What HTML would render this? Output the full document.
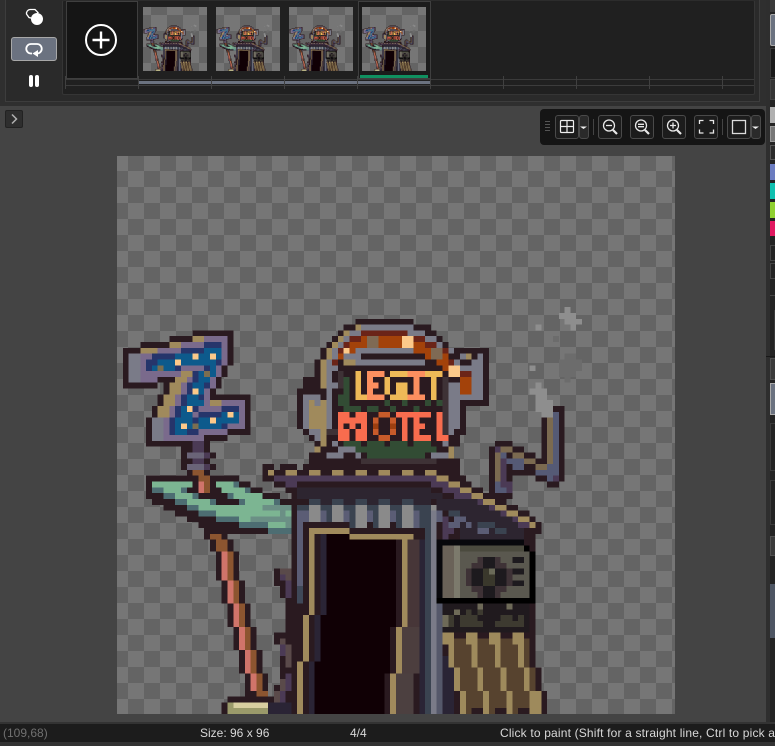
<!DOCTYPE html>
<html><head><meta charset="utf-8"><style>
html,body{margin:0;padding:0;width:775px;height:746px;overflow:hidden;background:#444;font-family:"Liberation Sans",sans-serif}
div,svg{position:absolute;box-sizing:border-box}
.b{border:1px solid #4a4a4a;border-radius:3px;background:#1c1c1c}
.t{top:7px;width:64px;height:64px;background:conic-gradient(#646464 25%,#767676 0 50%,#646464 0 75%,#767676 0);background-size:32px 32px;background-position:8px 8px}
.tick{width:1px;height:13px;top:76px;background:#404040}
.s{position:absolute;left:770px;width:5px;box-sizing:border-box}
.st{top:726px;font-size:12px;line-height:15px;color:#d8d8d8;white-space:nowrap;transform-origin:0 0}
</style></head><body>
<svg width="0" height="0" style="left:0;top:0"><defs><g id="a" shape-rendering="crispEdges">
<g fill="none" stroke-width="1" transform="translate(0 .5)">
<path stroke="#2a1a20" d="M13 30h7M9 31h11M4 32h16M1 33h19M1 34h19M1 35h19M1 36h18M1 37h18M1 38h17M1 39h6M8 39h10M8 40h9M7 41h16M7 42h16M6 43h17M6 44h17M5 45h18M5 46h18M5 47h18M5 48h14M5 49h11M11 50h5M11 51h6M11 52h5M11 53h6M12 54h4M5 55h16M5 56h18M5 57h20M5 58h23M6 59h24M8 60h23M10 61h21M12 62h19M14 63h17M15 64h16M15 65h4M17 66h3M16 66h4M16 67h4
M41 28h10M39 29h15M38 30h17M37 31h19M36 32h21M35 33h29M35 34h29M34 35h30M34 36h30M34 37h30M32 38h32M32 39h32M31 40h33M31 41h33M31 42h33M31 43h29M31 44h29M31 45h29M31 46h29M32 47h28M33 48h26M34 49h25M34 50h24M33 51h25M33 52h26M25 53h2M28 53h3M32 53h27M25 54h34M25 55h35M27 56h34M29 57h34M30 58h35M30 59h37M30 60h39M30 61h41M30 62h42M30 63h43M30 64h43M30 65h42"/>
<path stroke="#2a1a20" d="M75 43h2M73 44h4M73 45h4M73 46h4M73 47h4M73 48h4M73 49h4M65 49h3M64 50h6M73 50h4M64 51h8M73 51h4M64 52h13M64 53h13M64 54h13M64 55h4M72 55h5M64 56h4M74 56h2M64 57h4M64 58h4"/>
<path stroke="#a08a5c" d="M13 31h2M9 32h2M4 33h3M11 37h2M10 38h2M9 39h2M9 40h2M8 41h2M8 42h2M7 43h2M7 44h2M16 42h2"/>
<path stroke="#7a7b88" d="M2 34h2M2 35h2M2 36h2M2 37h2M2 38h2M6 45h2M6 46h2M6 47h2M6 48h2"/>
<path stroke="#7a6a8c" d="M15 31h4M11 32h4M18 32h1M7 33h4M18 33h1M4 34h2M18 34h1M4 35h1M18 35h1M4 36h1M11 36h4M17 36h1M4 37h7M17 37h1M4 38h3M12 38h1M16 38h1M11 39h1M16 39h1M11 40h1M15 40h1M10 41h1M15 41h1M10 42h1M15 42h1M18 42h4M9 43h1M14 43h4M21 43h1M9 44h1M13 44h1M21 44h1M8 45h1M21 45h1M8 46h1M19 46h3M8 47h1M14 47h5M8 48h7"/>
<path stroke="#0d5a8c" d="M15 33h3M10 34h8M7 35h10M6 36h4M16 36h1M14 37h3M14 38h2M13 39h2M13 40h2M12 41h2M12 42h3M11 43h2M11 44h2M18 44h3M10 45h11M10 46h8M10 47h2"/>
<path stroke="#26356b" d="M15 32h3M11 33h4M6 34h4M5 35h2M17 35h1M5 36h1M10 36h1M15 36h1M13 37h1M13 38h1M12 39h1M15 39h1M12 40h1M11 41h1M14 41h1M11 42h1M10 43h1M13 43h1M18 43h3M10 44h1M14 44h4M9 45h1M13 45h1M9 46h1M18 46h1M9 47h1M12 47h2"/>
<path stroke="#fcc98a" d="M13 34h1M16 34h1M10 35h1M13 40h1M12 43h1M19 44h1M16 45h1M11 46h1"/>
<path stroke="#7b6e50" d="M7 36h1M15 37h1M13 46h1"/>
<path stroke="#4b3a55" d="M13 49h2M13 50h2M15 51h1M13 52h2M15 53h1"/>
<path stroke="#6a6478" d="M12 51h3M12 53h3"/>
<path stroke="#d0746a" d="M14 56h1M14 57h1"/>
<path stroke="#8c5530" d="M13 54h2M14 55h2M15 56h1M15 57h1M16 65h2M17 66h2M17 67h2"/>
<path stroke="#7cb592" d="M6 56h7M17 56h3M8 57h3M18 57h4M10 58h3M20 58h5M12 59h4M22 59h5M14 60h11M17 61h11M29 61h1M21 62h2M26 63h3"/>
<path stroke="#4d6d72" d="M20 56h1M6 57h2M11 57h1M22 57h1M8 58h2M13 58h1M19 58h1M10 59h2M16 59h1M21 59h1M27 59h1M12 60h2M14 61h3M17 62h4M21 63h5M26 64h4"/>
<path stroke="#6b8f85" d="M25 60h5M28 61h1M23 62h7M29 63h1"/>
<path stroke="#7a7b88" d="M42 29h8M50 29h1M40 30h2M50 30h3M39 31h1M53 31h2M38 32h1M55 32h1M37 33h1M41 33h10M57 33h1M37 34h1M39 34h3M59 34h1M62 34h1M36 35h1M41 35h12M58 35h1M61 35h2M36 36h2M59 36h2M61 36h2M36 37h1M61 37h2M36 38h1M61 38h2M57 39h2M36 39h2M61 39h2M36 40h1M57 40h2M61 40h2M32 41h3M36 41h1M57 41h6M32 42h1M34 42h1M36 42h1M57 42h2M32 43h1M36 43h1M57 43h2M32 44h1M36 44h1M57 44h2M32 45h1M36 45h1M57 45h2M32 46h1M36 46h1M57 46h2M33 47h2M57 47h1M34 48h2M37 49h1M56 49h1M38 50h3M36 51h3M41 51h1M54 51h3"/>
<path stroke="#a08a5c" d="M41 29h1M39 30h1M38 31h1M37 32h1M36 33h1M36 34h1M35 35h1M39 35h2M35 36h1M35 37h1M35 38h1M35 39h1M33 42h1M35 42h1M33 43h3M33 44h3M33 45h3M33 46h3M35 47h1M35 48h1M35 49h1M34 50h1M60 34h1M57 50h1M57 51h1"/>
<path stroke="#6b2418" d="M42 30h8M40 31h2M51 31h2M39 32h1M53 32h2M38 33h1M56 33h1M37 35h1M57 35h1M59 37h2"/>
<path stroke="#a3420a" d="M42 31h1M45 31h4M40 32h3M45 32h4M51 32h2M40 33h1M51 33h3M38 34h1M53 34h1M56 34h1M55 35h2M56 36h1M59 38h2M59 39h2M59 40h2"/>
<path stroke="#7f6a54" d="M43 31h2M43 32h2M54 33h2M54 34h2"/>
<path stroke="#fcc98a" d="M49 31h2M49 32h2M39 33h1M57 36h2M57 37h2"/>
<path stroke="#3e3236" d="M56 38h1M56 39h1M56 40h1M56 41h1M56 42h1M56 43h1M56 44h1M56 45h1M56 46h1M56 47h1M55 48h1M38 37h1M38 38h1M38 39h1M36 47h2M42 52h13"/>
<path stroke="#324c34" d="M39 38h1M39 39h1M39 40h1M38 41h2M38 42h2M46 42h1M49 42h1M53 42h1M55 42h1M39 43h3M43 43h2M47 43h1M51 43h1M39 49h3M43 49h3M47 49h3M51 49h3M41 50h14M43 51h10"/>
<path stroke="#eeb957" d="M41 37h1M41 38h1M41 39h1M41 40h1M41 41h2M47 37h3M46 38h1M46 39h1M48 39h2M46 40h1M48 40h2M47 41h3M53 37h3M54 38h1M54 39h1M54 40h1M54 41h1"/>
<path stroke="#fc8f5f" d="M43 37h3M43 38h1M43 39h2M43 40h1M43 41h3M50 37h3M51 38h1M51 39h1M51 40h1M50 41h3"/>
<path stroke="#f86c4e" d="M38 44h2M41 44h2M38 45h5M38 46h1M40 46h1M42 46h1M38 47h2M41 47h2M38 48h2M41 48h2M48 44h3M49 45h1M49 46h1M49 47h1M49 48h1M51 44h3M51 45h1M51 46h2M51 47h1M51 48h3M55 44h1M55 45h1M55 46h1M55 47h1M55 48h2"/>
<path stroke="#c75b2a" d="M45 44h2M44 45h1M47 45h1M44 47h1M47 47h1M45 48h2"/>
<path stroke="#9c3f10" d="M44 46h1M47 46h1"/>
<path stroke="#555a75" d="M75 44h1M75 45h1M75 46h1M75 47h1M75 48h1M75 49h1M75 50h1M75 51h1M75 52h1M74 53h2M72 54h4M74 55h1M66 51h1M67 52h3M68 53h2M65 57h2M65 56h1"/>
<path stroke="#7b6a50" d="M74 45h1M74 46h1M74 47h1M74 48h1M74 49h1M74 50h1M74 51h1M74 52h1M72 53h2M66 50h2M65 51h1M68 51h2M65 52h1M70 52h2M65 53h1M65 54h1M65 55h1"/>
<path stroke="#4b3a55" d="M65 50h1M66 52h1M66 53h1M66 54h1M66 55h1M66 56h2M67 57h1M75 55h1"/>
<path stroke="#8e8e8e" d="M77 26h1M76 27h3M77 28h3M78 29h1M72 29h1M71 36h1M72 39h1M71 40h3M72 41h2M72 42h3M72 43h3M73 44h2"/>
<path stroke="#6c6c6c" d="M75 31h1M77 34h2M76 35h4M76 36h4M76 37h3M77 38h1"/>
<path stroke="#a08a5c" d="M26 54h1M29 54h2M33 54h2M37 54h2M41 54h2M45 54h2M49 54h2M53 54h2M55 55h2M57 56h2M59 57h2M61 58h2M63 59h2M65 60h2M67 61h2M69 62h2M71 63h1"/>
<path stroke="#4b3a55" d="M27 55h28M29 56h2M54 56h3M56 57h3M58 58h3M60 59h3M62 60h3M64 61h3M66 62h3M68 63h3"/>
<path stroke="#2d2530" d="M31 57h23M31 58h25M35 59h2M39 59h2M43 59h2M47 59h2M51 59h3M55 59h7M55 60h9M59 61h7M59 62h9M59 63h10M59 64h11M59 65h11"/>
<path stroke="#3a4350" d="M33 59h2M37 59h2M41 59h2M45 59h2M49 59h2M31 60h2M35 60h2M39 60h2M43 60h2M47 60h2M51 60h3M36 61h1M40 61h1M44 61h1M48 61h1M52 61h2M36 62h1M40 62h1M44 62h1M48 62h1M52 62h2M40 63h1M44 63h1M48 63h1M52 63h2M57 61h2M62 63h3M65 64h2"/>
<path stroke="#8a8a8a" d="M33 60h2M37 60h2M41 60h2M45 60h2M49 60h2M54 60h1M33 61h2M37 61h2M41 61h2M45 61h2M49 61h2M33 62h2M37 62h2M41 62h2M45 62h2M49 62h2M41 63h2M45 63h2M49 63h2"/>
<path stroke="#5b5d75" d="M31 61h2M35 61h1M39 61h1M43 61h1M47 61h1M51 61h1M55 61h1M31 62h2M35 62h1M39 62h1M43 62h1M47 62h1M51 62h1M55 62h1M31 63h1M51 63h1M58 62h2M57 63h2M60 63h1M62 64h2M31 64h1M31 65h1"/>
<path stroke="#7a7b88" d="M54 61h1M54 62h1M54 63h1M54 64h1M54 65h1"/>
<path stroke="#4b3a55" d="M56 62h1M56 63h1M56 64h2M56 65h1"/>
<path stroke="#a08a5c" d="M33 64h7M33 65h1M40 65h11"/>
</g>
<rect x="30" y="66" width="42" height="30" fill="#2a1a20"/>
<rect x="29" y="79" width="2" height="17" fill="#2a1a20"/>
<rect x="31" y="66" width="1" height="8" fill="#5b5d75"/><rect x="31" y="74" width="1" height="3" fill="#3f4858"/>
<rect x="33" y="66" width="1" height="13" fill="#a08a5c"/><rect x="32" y="79" width="1" height="8" fill="#a08a5c"/><rect x="31" y="87" width="1" height="9" fill="#a08a5c"/>
<rect x="35" y="65" width="1" height="14" fill="#2a2435"/><rect x="34" y="79" width="1" height="8" fill="#2a2435"/><rect x="33" y="87" width="1" height="9" fill="#2a2435"/>
<rect x="36" y="65" width="4" height="1" fill="#100005"/>
<rect x="36" y="66" width="12" height="13" fill="#100005"/><rect x="35" y="79" width="13" height="2" fill="#100005"/><rect x="35" y="81" width="12" height="6" fill="#100005"/><rect x="34" y="87" width="13" height="2" fill="#100005"/><rect x="34" y="89" width="12" height="7" fill="#100005"/>
<rect x="49" y="65" width="1" height="16" fill="#a08a5c"/><rect x="48" y="81" width="1" height="8" fill="#a08a5c"/><rect x="47" y="89" width="1" height="7" fill="#a08a5c"/>
<rect x="50" y="66" width="2" height="15" fill="#473638"/><rect x="49" y="81" width="3" height="8" fill="#4c3e3e"/><rect x="48" y="89" width="3" height="7" fill="#4c4040"/>
<rect x="52" y="66" width="1" height="30" fill="#2a2435"/><rect x="53" y="64" width="1" height="32" fill="#3a4350"/>
<rect x="54" y="66" width="1" height="30" fill="#7a7b88"/><rect x="55" y="77" width="1" height="19" fill="#55586a"/><rect x="56" y="86" width="2" height="10" fill="#2a2435"/>
<rect x="55" y="66" width="15" height="11" fill="#08080c"/><rect x="55" y="76" width="17" height="1" fill="#000"/><rect x="71" y="68" width="1" height="9" fill="#000"/>
<rect x="56" y="67" width="15" height="9" fill="#5a584f"/><rect x="56" y="67" width="2" height="9" fill="#6a6258"/><rect x="58" y="67" width="1" height="9" fill="#7c7a6c"/><rect x="59" y="67" width="11" height="1" fill="#4b4a3e"/><rect x="70" y="67" width="1" height="1" fill="#000"/>
<path fill="#3e3236" d="M62 69h4v1h1v1h1v3h-1v1h-1v1h-4v-1h-1v-1h-1v-3h1v-1h1z"/>
<path fill="#1d1a1e" d="M63 69h2v2h2v3h-2v2h-2v-2h-2v-3h2z"/><rect x="63" y="71" width="2" height="3" fill="#3a382c"/><rect x="64" y="71" width="1" height="1" fill="#6a6a58"/>
<rect x="68" y="69" width="2" height="1" fill="#1d1a1e"/><rect x="68" y="71" width="2" height="1" fill="#1d1a1e"/><rect x="68" y="73" width="2" height="1" fill="#1d1a1e"/>
<rect x="56" y="77" width="15" height="5" fill="#201a1e"/>
<path fill="#3d3a30" d="M57 79h1v2h-1zM59 79h3v1h1v1h-4zM60 78h1v1h-1zM65 80h4v1h-4zM66 79h2v1h-2zM69 79h1v2h-1zM62 78h1v1h-1z"/>
<path fill="#6e6a58" d="M58 78h1v1h-1zM62 77h1v1h-1zM67 77h1v1h-1zM56 79h1v2h-1z"/>
<rect x="57" y="82" width="14" height="1" fill="#2a1a20"/><rect x="57" y="83" width="14" height="5" fill="#57432f"/><rect x="58" y="88" width="14" height="4" fill="#57432f"/><rect x="59" y="92" width="14" height="4" fill="#57432f"/>
<path fill="#9e8a5c" d="M56 82h2v2h-2zM60 82h2v2h-2zM64 82h2v2h-2zM68 82h2v2h-2zM57 84h1v4h-1zM61 84h1v4h-1zM65 84h1v4h-1zM69 84h1v4h-1zM58 88h1v4h-1zM62 88h1v4h-1zM66 88h1v4h-1zM70 88h1v4h-1zM59 92h1v4h-1zM63 92h1v4h-1zM67 92h1v4h-1zM71 92h2v4h-2z"/>
<path fill="#2a1a20" d="M71 84h1v4h-1zM72 88h1v4h-1zM73 92h1v4h-1zM61 95h2v1h-2zM65 95h2v1h-2zM69 95h2v1h-2z"/>
<path fill="#2a1a20" d="M17 68h4v5h-4zM18 73h4v4h-4zM19 77h4v4h-4zM20 81h4v4h-4zM21 85h4v4h-4zM22 89h4v4h-4zM19 93h8v1h-8zM18 94h2v2h-2zM27 71h4v3h-4zM28 74h3v2h-3zM29 76h2v6h-2zM27 82h4v2h-4zM28 84h3v7h-3zM27 91h4v5h-4z"/>
<path fill="#d0746a" d="M18 68h1v5h-1zM19 73h1v4h-1zM20 77h1v4h-1zM21 81h1v4h-1zM22 85h1v4h-1zM23 89h1v3h-1z"/>
<path fill="#8c5530" d="M19 68h1v5h-1zM20 73h1v4h-1zM21 77h1v4h-1zM22 81h1v4h-1zM23 85h1v4h-1zM24 89h1v3h-1zM24 92h2v1h-2z"/>
<rect x="19" y="94" width="7" height="2" fill="#9a9a6a"/><rect x="20" y="94" width="6" height="1" fill="#d8cfa0"/>
<path fill="#5a4a4a" d="M28 71h2v1h-2zM29 72h1v1h-1zM28 83h1v1h-1zM29 84h1v4h-1zM28 90h1v2h-1zM27 92h1v2h-1z"/>
<path fill="#4b3a55" d="M28 72h1v1h-1zM29 73h1v3h-1zM28 84h1v2h-1zM29 89h1v3h-1zM28 92h1v2h-1z"/>
<rect x="26" y="94" width="4" height="2" fill="#2a2435"/>
</g></defs></svg>

<div style="left:0;top:0;width:775px;height:106px;background:#2f2f2f"></div>
<div style="left:5px;top:0;width:755px;height:102px;background:#2a2a2a;border:1px solid #3d3d3d;border-top:0"></div>
<div style="left:62px;top:0;width:693px;height:95px;background:#202020;border:1px solid #353535;border-top:1px solid #2c2c2c;border-radius:2px"></div>
<svg style="left:20px;top:6px" width="28" height="22" viewBox="0 0 28 22"><path d="M10 3.500h5l3 3-5 6-4-1-2.500-3.500A4 4 0 0 1 10 3.500z" fill="none" stroke="#fff" stroke-width="1.300"/><circle cx="17" cy="13" r="6" fill="#fff"/></svg>
<div style="left:11px;top:37px;width:46px;height:24px;background:#6b7280;border:1px solid #a8a8a8;border-radius:3px"></div>
<svg style="left:24px;top:41px" width="20" height="18" viewBox="0 0 20 18"><path d="M8 12.500H7A4.700 4.700 0 0 1 7 3h6a4.700 4.700 0 0 1 0 9.500h-1" fill="none" stroke="#fff" stroke-width="1.800"/><path d="M8.500 12.500l5.500-3.500v7z" fill="#fff"/></svg>
<div style="left:29px;top:75px;width:4px;height:12px;background:#fff;border-radius:2px"></div>
<div style="left:35px;top:75px;width:4px;height:12px;background:#fff;border-radius:2px"></div>

<div style="left:66px;top:1px;width:72px;height:78px;background:#151515;border:1px solid #3f3f3f"></div>
<svg style="left:84px;top:23px" width="34" height="34" viewBox="0 0 34 34"><circle cx="17" cy="17" r="15" fill="none" stroke="#fff" stroke-width="2"/><path d="M17 8.500v17M8.500 17h17" stroke="#fff" stroke-width="2.400"/></svg>
<div class="t" style="left:143px"></div><div class="t" style="left:216px"></div><div class="t" style="left:289px"></div>
<div style="left:358px;top:1px;width:73px;height:78px;border:1px solid #3f3f3f;background:#1b1b1b"></div>
<div class="t" style="left:362px"></div>
<svg style="left:143px;top:7px" width="64" height="64" viewBox="0 0 96 96"><use href="#a"/></svg>
<svg style="left:216px;top:7px" width="64" height="64" viewBox="0 0 96 96"><use href="#a"/></svg>
<svg style="left:289px;top:7px" width="64" height="64" viewBox="0 0 96 96"><use href="#a"/></svg>
<svg style="left:362px;top:7px" width="64" height="64" viewBox="0 0 96 96"><use href="#a"/></svg>
<div style="left:360px;top:75px;width:68px;height:3px;background:#109060"></div>
<div style="left:65px;top:79px;width:689px;height:1px;background:#3a3a3a"></div>
<div style="left:139px;top:81px;width:292px;height:3px;background:#6b7280"></div>
<div style="left:65px;top:85px;width:689px;height:1px;background:#3c3c3c"></div>
<div class="tick" style="left:65px"></div><div class="tick" style="left:138px"></div><div class="tick" style="left:211px"></div><div class="tick" style="left:284px"></div><div class="tick" style="left:357px"></div><div class="tick" style="left:430px"></div><div class="tick" style="left:503px"></div><div class="tick" style="left:576px"></div><div class="tick" style="left:649px"></div><div class="tick" style="left:722px"></div>

<div style="left:5px;top:110px;width:18px;height:18px;background:#2e2e2e;border:1px solid #222;border-radius:2px"></div>
<svg style="left:9px;top:113px" width="10" height="12" viewBox="0 0 10 12"><path d="M3 1.500L7.500 6 3 10.500" fill="none" stroke="#b0b0b0" stroke-width="1.500"/></svg>

<div style="left:117px;top:156px;width:558px;height:558px;background:conic-gradient(#646464 25%,#767676 0 50%,#646464 0 75%,#767676 0);background-size:32px 32px;background-position:27px -1px"></div>
<svg style="left:117px;top:156px" width="558" height="558" viewBox="0 0 96 96"><use href="#a"/></svg>

<div style="left:540px;top:109px;width:225px;height:36px;background:#151515;border-radius:4px"></div>
<div style="left:545px;top:121px;width:5px;height:12px;background:repeating-linear-gradient(#555 0 1px,transparent 1px 3px)"></div>
<div class="b" style="left:555px;top:115px;width:24px;height:24px"></div>
<div class="b" style="left:579px;top:115px;width:10px;height:24px;background:#2a2a2a"></div>
<div style="left:593px;top:119px;width:1px;height:16px;background:#444"></div>
<div class="b" style="left:598px;top:115px;width:24px;height:24px"></div>
<div class="b" style="left:630px;top:115px;width:24px;height:24px"></div>
<div class="b" style="left:662px;top:115px;width:24px;height:24px"></div>
<div class="b" style="left:694px;top:115px;width:24px;height:24px"></div>
<div style="left:722px;top:119px;width:1px;height:16px;background:#444"></div>
<div class="b" style="left:727px;top:115px;width:24px;height:24px"></div>
<div class="b" style="left:751px;top:115px;width:10px;height:24px;background:#2a2a2a"></div>
<svg style="left:540px;top:109px" width="225" height="36" viewBox="0 0 225 36">
<path d="M21.500 11.500h11a1 1 0 0 1 1 1v10a1 1 0 0 1-1 1h-11a1 1 0 0 1-1-1v-10a1 1 0 0 1 1-1zM27 11.500v12M20.500 17.500h13" fill="none" stroke="#eee" stroke-width="1.200"/>
<path d="M40 17.500h7l-3.500 2.500z" fill="#eee"/>
<g fill="none" stroke="#e8e8e8" stroke-width="1.300"><circle cx="69" cy="16.500" r="5.500"/><path d="M66 16.500h6"/><path d="M73 21l4 4" stroke-width="2.200"/>
<circle cx="101" cy="16.500" r="5.500"/><path d="M98 15.300h6M98 17.700h6"/><path d="M105 21l4 4" stroke-width="2.200"/>
<circle cx="133" cy="16.500" r="5.500"/><path d="M130 16.500h6M133 13.500v6"/><path d="M137 21l4 4" stroke-width="2.200"/>
<path d="M159.500 15v-3.500h4M169.500 11.500h4V15M173.500 20.500v3.500h-4M163.500 24h-4v-3.500" stroke-width="1.300"/>
<rect x="192.500" y="11.500" width="13" height="13" stroke="#ddd"/></g>
<path d="M212 17.500h7l-3.500 2.500z" fill="#eee"/>
</svg>

<div style="left:766px;top:0;width:4px;height:746px;background:#2e2e2e"></div>
<div style="left:770px;top:0;width:5px;height:746px;background:#232323"></div>
<div class="s" style="top:0;height:12px;background:#3a3a3a"></div>
<div class="s" style="top:14px;height:32px;background:#6b7280;border:1px solid #aaa;border-right:0;border-radius:2px 0 0 2px"></div>
<div class="s" style="top:48px;height:30px;background:#1a1a1a;border:1px solid #3a3a3a;border-right:0"></div>
<div class="s" style="top:79px;height:21px;background:#353535;border:1px solid #444;border-right:0"></div>
<div class="s" style="top:107px;height:16px;background:#b0b0b0"></div>
<div class="s" style="top:126px;height:16px;background:#777;border:1px solid #999;border-right:0"></div>
<div class="s" style="top:145px;height:15px;background:#2a2a2a;border:1px solid #555;border-right:0"></div>
<div class="s" style="top:164px;height:16px;background:#6b7cc0"></div>
<div class="s" style="top:183px;height:16px;background:#10c0b0"></div>
<div class="s" style="top:202px;height:16px;background:#90d030"></div>
<div class="s" style="top:221px;height:15px;background:#e01860"></div>
<div class="s" style="top:245px;height:16px;border:1px solid #444;border-right:0"></div>
<div class="s" style="top:263px;height:16px;border:1px solid #444;border-right:0"></div>
<div style="left:770px;top:295px;width:5px;height:1px;background:#444"></div>
<div class="s" style="top:310px;height:40px;left:774px;background:#3a3a3a;width:1px"></div>
<div style="left:766px;top:356px;width:9px;height:1px;background:#181818"></div>
<div class="s" style="top:358px;height:22px;background:#3a3a3a;border:1px solid #505050;border-right:0"></div>
<div class="s" style="top:383px;height:32px;background:#6b7280;border:1px solid #aaa;border-right:0"></div>
<div class="s" style="top:423px;height:48px;border:1px solid #3a3a3a;border-right:0"></div>
<div class="s" style="top:480px;height:45px;border:1px solid #3a3a3a;border-right:0"></div>
<div class="s" style="top:536px;height:20px;background:#3a3a3a;border:1px solid #505050;border-right:0"></div>
<div class="s" style="top:584px;height:54px;background:#4d5563"></div>

<div style="left:0;top:722px;width:775px;height:24px;background:#333"></div>
<div style="left:0;top:724px;width:775px;height:18px;background:#1c1c1c"></div>
<div class="st" style="left:3px;color:#707070">(109,68)</div>
<div class="st" style="left:200px">Size: 96 x 96</div>
<div class="st" style="left:350px">4/4</div>
<div class="st" style="left:500px;letter-spacing:.17px">Click to paint (Shift for a straight line, Ctrl to pick a</div>
</body></html>
